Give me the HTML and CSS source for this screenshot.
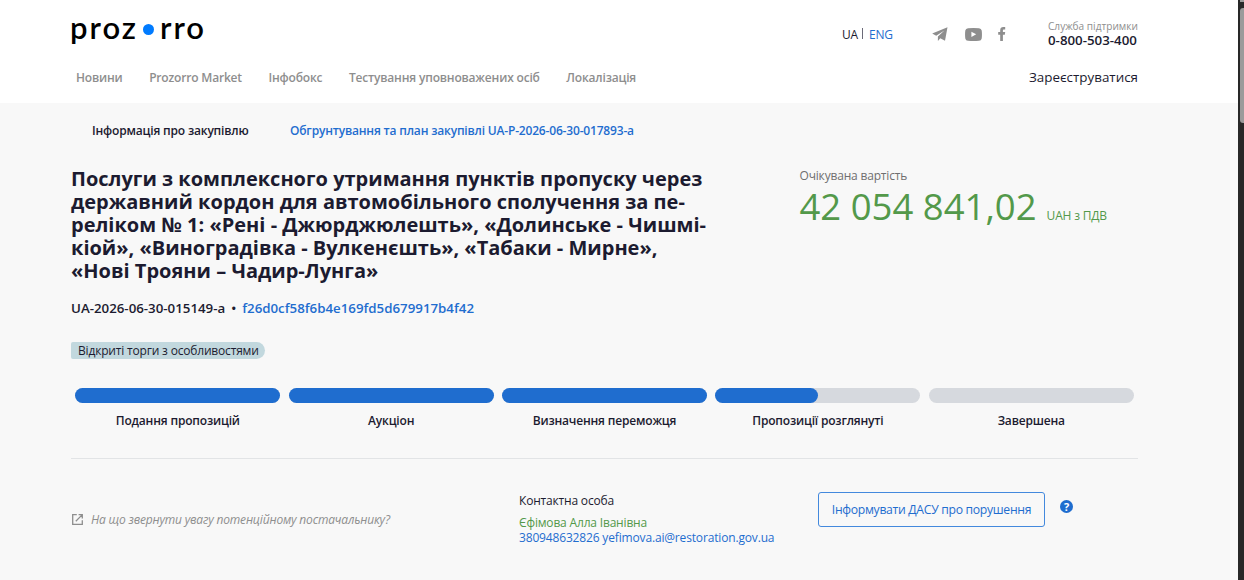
FILE: index.html
```html
<!DOCTYPE html>
<html lang="uk">
<head>
    <meta charset="UTF-8">
    <meta name="viewport" content="width=device-width, initial-scale=1.0">
    <title>Prozorro - Інформація про закупівлю</title>
    <link rel="stylesheet" href="styles.css">
</head>
<body>
    <div class="page">
        <header class="header">
            <div class="header-top">
                <a class="logo" href="#"><span class="logo-left">proz</span><span class="logo-dot"></span><span class="logo-right">rro</span></a>
                <div class="lang">
                    <span>UA</span>
                    <span class="lang-sep"></span>
                    <a href="#">ENG</a>
                </div>
                <div class="social">
                    <svg class="icon-telegram" width="16" height="15" viewBox="0 0 16 15">
                        <path fill="#8e8e8e" d="M15.5 0.3L0.2 6.6L4.2 8.7L12.4 3.4L5.9 9.6V14L8.3 11.2L13 13.8Z"/>
                    </svg>
                    <svg class="icon-youtube" width="17" height="13" viewBox="0 0 17 13">
                        <path fill="#8e8e8e" fill-rule="evenodd" d="M3 0.3Q8.5 -0.2 14 0.3Q16.3 0.5 16.7 2.6Q17.2 6.5 16.7 10.4Q16.3 12.5 14 12.7Q8.5 13.2 3 12.7Q0.7 12.5 0.3 10.4Q-0.2 6.5 0.3 2.6Q0.7 0.5 3 0.3ZM6.4 3.7V9L11.2 6.35Z"/>
                    </svg>
                    <svg class="icon-facebook" width="8" height="14" viewBox="0 0 8 14">
                        <path fill="#8e8e8e" d="M2.2 14V7.8H0.2V5.1H2.2V3.4C2.2 1.2 3.4 0.1 5.3 0.1H7.2V2.5H6C5.2 2.5 4.9 2.9 4.9 3.6V5.1H7.2L6.8 7.8H4.9V14Z"/>
                    </svg>
                </div>
                <div class="support">
                    <span>Служба підтримки</span>
                    <strong>0-800-503-400</strong>
                </div>
            </div>
            <nav class="nav">
                <a href="#">Новини</a>
                <a href="#">Prozorro Market</a>
                <a href="#">Інфобокс</a>
                <a href="#">Тестування уповноважених осіб</a>
                <a href="#">Локалізація</a>
                <a class="register" href="#">Зареєструватися</a>
            </nav>
        </header>

        <main class="main">
            <div class="tabs">
                <span class="tab-active">Інформація про закупівлю</span>
                <a href="#">Обгрунтування та план закупівлі UA-P-2026-06-30-017893-a</a>
            </div>

            <div class="tender">
                <div class="tender-info">
                    <h1>Послуги з комплексного утримання пунктів пропуску через<br>
                        державний кордон для автомобільного сполучення за пе-<br>
                        реліком № 1: «Рені - Джюрджюлешть», «Долинське - Чишмі-<br>
                        кіой», «Виноградівка - Вулкенєшть», «Табаки - Мирне»,<br>
                        «Нові Трояни – Чадир-Лунга»</h1>
                    <div class="tender-id">
                        <span>UA-2026-06-30-015149-a</span>
                        <span class="bullet">•</span>
                        <a href="#">f26d0cf58f6b4e169fd5d679917b4f42</a>
                    </div>
                    <span class="badge">Відкриті торги з особливостями</span>
                </div>
                <div class="price">
                    <div class="price-label">Очікувана вартість</div>
                    <div class="price-value"><span class="amount">42 054 841,02</span><span class="currency">UAH з ПДВ</span></div>
                </div>
            </div>

            <div class="steps">
                <div class="step"><div class="bar"><div class="fill"></div></div><span>Подання пропозицій</span></div>
                <div class="step"><div class="bar"><div class="fill"></div></div><span>Аукціон</span></div>
                <div class="step"><div class="bar"><div class="fill"></div></div><span>Визначення переможця</span></div>
                <div class="step"><div class="bar"><div class="fill half"></div></div><span>Пропозиції розглянуті</span></div>
                <div class="step"><div class="bar"></div><span>Завершена</span></div>
            </div>

            <div class="bottom">
                <a class="hint" href="#">
                    <svg width="11" height="11" viewBox="0 0 11 11" fill="none" stroke="#8e8e8e" stroke-width="1.3">
                        <path d="M4.8 0.7H0.7V10.3H10.3V6.2M6.6 0.7H10.3V4.4M10.1 0.9L3.8 7.2"/>
                    </svg>
                    <span>На що звернути увагу потенційному постачальнику?</span>
                </a>
                <div class="contact">
                    <div class="contact-title">Контактна особа</div>
                    <div class="contact-name">Єфімова Алла Іванівна</div>
                    <div class="contact-data">380948632826 yefimova.ai@restoration.gov.ua</div>
                </div>
                <button class="inform-btn">Інформувати ДАСУ про порушення</button>
                <span class="help">?</span>
            </div>
        </main>
    </div>
    <div class="scrollbar">
        <div class="scroll-up"></div>
        <div class="thumb"></div>
    </div>
</body>
</html>
```
FILE: styles.css
```css
* {
    box-sizing: border-box;
}
body {
    margin: 0;
    height: 580px;
    display: flex;
    overflow: hidden;
    font-family: 'Open Sans', sans-serif;
    font-size: 12px;
    letter-spacing: -0.18px;
    color: #1c1b30;
    background: #f8f8f8;
}
a {
    color: #1f6dcf;
    text-decoration: none;
}
.page {
    width: 1238px;
    flex: none;
}
.header {
    height: 103px;
    padding: 0 100px 0 71px;
    background: #fff;
}
.header-top {
    display: flex;
    height: 61px;
}
.logo {
    display: flex;
    width: 771px;
    padding-top: 9px;
    font-family: 'Lato', sans-serif;
    font-size: 31px;
    line-height: 36px;
    font-weight: 600;
    color: #000;
}
.logo-left {
    width: 72px;
    margin-left: -1px;
    letter-spacing: 2px;
}
.logo-right {
    letter-spacing: 2px;
}
.logo-dot {
    width: 11px;
    height: 11px;
    margin: 15px 6px 0 1px;
    border-radius: 50%;
    background: #007bff;
}
.lang {
    display: flex;
    width: 90px;
    padding-top: 25px;
    line-height: 19px;
}
.lang-sep {
    width: 1px;
    height: 11px;
    margin: 3px 6px 0 4px;
    background: #6b6a78;
}
.social {
    display: flex;
    width: 116px;
    padding-top: 27px;
}
.icon-youtube {
    margin: 1px 16px 0 17px;
}
.support {
    display: flex;
    flex-direction: column;
    width: 90px;
    padding-top: 20px;
    letter-spacing: 0;
    white-space: nowrap;
}
.support span {
    font-size: 10.1px;
    line-height: 13px;
    color: #8e8e8e;
}
.support strong {
    font-size: 13.3px;
    line-height: 15px;
    font-weight: 600;
}
.nav {
    display: flex;
    padding-left: 5px;
    gap: 26.6px;
    line-height: 34px;
    font-weight: 600;
}
.nav a {
    color: #8e8e8e;
}
.nav .register {
    margin-left: auto;
    font-size: 13.4px;
    letter-spacing: 0;
    font-weight: 400;
    line-height: 33px;
    color: #1c1b30;
}
.main {
    padding: 0 100px 0 71px;
}
.tabs {
    display: flex;
    gap: 41.5px;
    padding: 19px 0 0 21px;
    line-height: 18px;
    font-weight: 600;
}
.tender {
    display: flex;
    padding-top: 27px;
}
.tender-info {
    width: 728.5px;
}
h1 {
    margin: 0;
    font-size: 20px;
    line-height: 23px;
    letter-spacing: 0;
    font-weight: 700;
    white-space: nowrap;
}
.tender-id {
    display: flex;
    margin-top: 16px;
    font-size: 13.3px;
    line-height: 20px;
    letter-spacing: 0;
    font-weight: 600;
}
.bullet {
    width: 17px;
    text-align: center;
}
.badge {
    display: block;
    width: 194px;
    margin-top: 24px;
    padding-left: 7px;
    line-height: 17px;
    background: #c2d8de;
    border-radius: 2px 9px 9px 2px;
    white-space: nowrap;
}
.price-label {
    line-height: 17px;
    color: #6f6f6f;
}
.price-value {
    display: flex;
    align-items: baseline;
    gap: 10px;
    line-height: 44px;
    color: #53994a;
    white-space: nowrap;
}
.amount {
    font-size: 36.5px;
    letter-spacing: 0;
}
.steps {
    display: flex;
    gap: 8.6px;
    height: 71px;
    margin-top: 29px;
    padding: 0 4.4px 0 4.4px;
    border-bottom: 1px solid #e2e4e6;
}
.step {
    flex: 1;
    text-align: center;
    line-height: 35px;
    font-weight: 600;
}
.bar {
    height: 15px;
    border-radius: 8px;
    background: #d6d9de;
}
.fill {
    height: 15px;
    border-radius: 8px;
    background: #1f6dcf;
}
.half {
    width: 50%;
}
.bottom {
    display: flex;
    align-items: flex-start;
    padding-top: 33px;
}
.hint {
    display: flex;
    align-items: center;
    gap: 8px;
    width: 448px;
    margin-top: 18px;
    padding-left: 1px;
    line-height: 19px;
    font-style: italic;
    color: #8e8e8e;
}
.contact {
    width: 299px;
    line-height: 15px;
}
.contact-title {
    margin-bottom: 6px;
    line-height: 17px;
}
.contact-name {
    color: #53994a;
}
.contact-data {
    letter-spacing: -0.16px;
    color: #1f6dcf;
}
.inform-btn {
    width: 227px;
    height: 35px;
    padding: 0;
    font-family: inherit;
    font-size: 12.2px;
    letter-spacing: -0.3px;
    white-space: nowrap;
    color: #1f6dcf;
    background: #f8f8f8;
    border: 1px solid #4389dd;
    border-radius: 3px;
}
.help {
    width: 13px;
    height: 13px;
    margin: 8px 0 0 15px;
    font-size: 11px;
    line-height: 13px;
    font-weight: 700;
    text-align: center;
    color: #fff;
    background: #1f6dcf;
    border-radius: 50%;
}
.scrollbar {
    width: 6px;
    flex: none;
    padding-left: 2px;
    background: #282828;
}
.scroll-up {
    height: 2px;
    margin-bottom: 6px;
    background: #9b9b9b;
}
.thumb {
    height: 115px;
    background: #9b9b9b;
    border-radius: 3px 0 0 3px;
}
```
